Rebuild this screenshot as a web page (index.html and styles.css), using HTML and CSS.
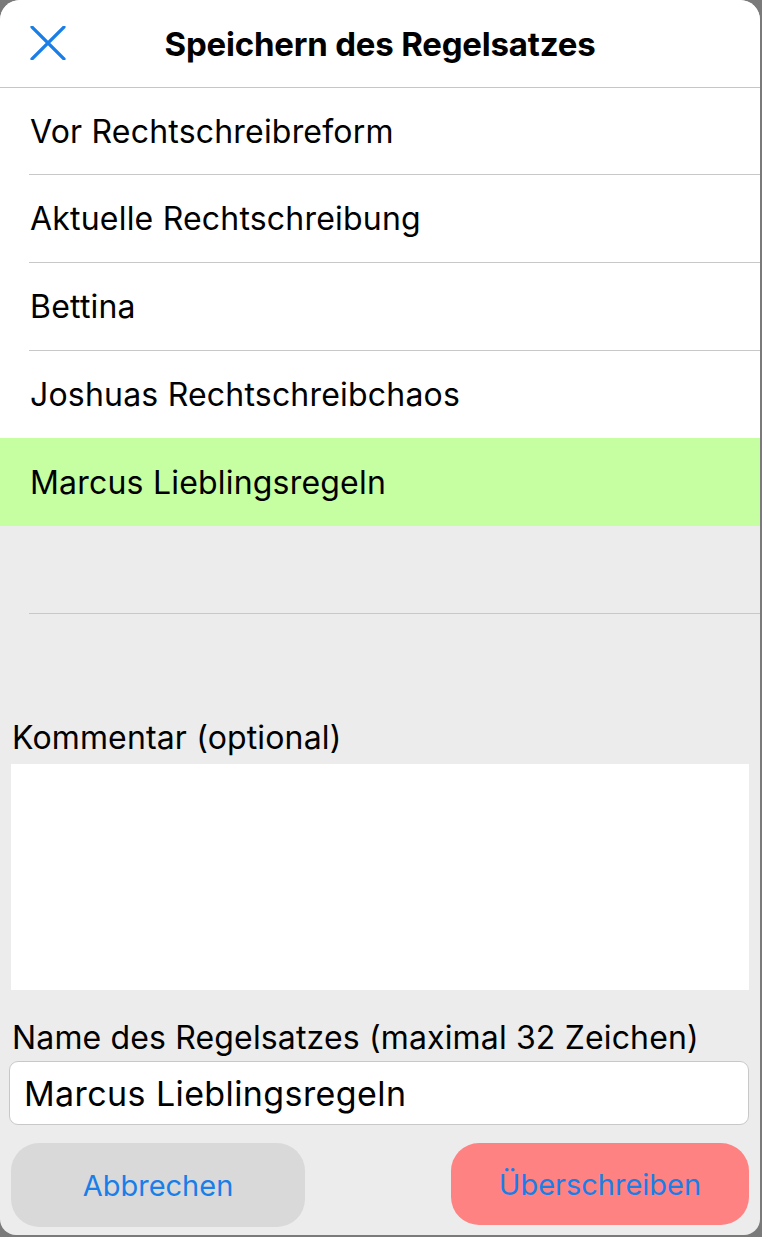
FILE: index.html
```html
<!DOCTYPE html>
<html lang="de">
<head>
<meta charset="utf-8">
<title>Speichern des Regelsatzes</title>
<link rel="stylesheet" href="styles.css">
</head>
<body>
<div class="sheet">
  <header class="header">
    <button class="close" aria-label="Schließen">
      <svg width="36" height="34" viewBox="0 0 36 34"><path d="M2 1 L34 33 M34 1 L2 33" stroke="#1a7ee8" stroke-width="3.2" stroke-linecap="round" fill="none"/></svg>
    </button>
    <h1 class="title">Speichern des Regelsatzes</h1>
  </header>
  <ul class="list">
    <li class="row"><div class="row-inner">Vor Rechtschreibreform</div></li>
    <li class="row"><div class="row-inner">Aktuelle Rechtschreibung</div></li>
    <li class="row"><div class="row-inner">Bettina</div></li>
    <li class="row before-selected"><div class="row-inner">Joshuas Rechtschreibchaos</div></li>
    <li class="row selected"><div class="row-inner">Marcus Lieblingsregeln</div></li>
    <li class="row empty"><div class="row-inner"></div></li>
  </ul>
  <div class="form">
    <label class="label label-comment">Kommentar (optional)</label>
    <div class="textarea"></div>
    <label class="label label-name">Name des Regelsatzes (maximal 32 Zeichen)</label>
    <div class="input">Marcus Lieblingsregeln</div>
    <div class="buttons">
      <button class="btn btn-cancel">Abbrechen</button>
      <button class="btn btn-overwrite">Überschreiben</button>
    </div>
  </div>
</div>
</body>
</html>
```

FILE: styles.css
```css
html, body {
  margin: 0;
  padding: 0;
  background: #7a7a7a;
  font-family: "Inter", "Roboto", "Liberation Sans", sans-serif;
  color: #000;
}
.sheet {
  width: 760px;
  height: 1235px;
  background: #ececec;
  border-radius: 20px 20px 16px 16px;
  overflow: hidden;
  display: flex;
  flex-direction: column;
}
.header {
  height: 87px;
  background: #fff;
  border-bottom: 1px solid #c6c6c6;
  display: flex;
  align-items: center;
  position: relative;
  flex-shrink: 0;
}
.close {
  position: absolute;
  left: 30px;
  top: 26px;
  width: 36px;
  height: 34px;
  padding: 0;
  border: 0;
  background: none;
  display: flex;
}
.title {
  margin: 0;
  width: 100%;
  text-align: center;
  font-size: 33px;
  font-weight: 700;
  letter-spacing: -0.2px;
  padding-left: 0;
}
.list {
  list-style: none;
  margin: 0;
  padding: 0;
  background: #fff;
}
.row {
  padding-left: 29px;
  background: #fff;
}
.row-inner {
  height: 87px;
  border-bottom: 1px solid #c8c8c8;
  display: flex;
  align-items: center;
  padding-left: 1px;
  font-size: 32px;
  letter-spacing: 0.2px;
}
.row:first-child .row-inner {
  height: 86px;
}
.row.before-selected .row-inner {
  border-bottom: 0;
}
.row.selected {
  background: #c6fea2;
}
.row.selected .row-inner {
  border-bottom: 0;
  height: 88px;
}
.row.empty {
  background: #ececec;
}
.row.empty .row-inner {
  height: 87px;
}
.form {
  display: flex;
  flex-direction: column;
  padding: 0 11px 0 11px;
}
.label {
  font-size: 32px;
  line-height: 38px;
  padding-left: 1px;
  letter-spacing: 0.15px;
}
.label-comment {
  margin-top: 105px;
}
.textarea {
  height: 226px;
  background: #fff;
  margin-top: 7px;
}
.label-name {
  margin-top: 29px;
}
.input {
  margin-top: 4px;
  margin-left: -2px;
  height: 62px;
  background: #fff;
  border: 1px solid #c8c8c8;
  border-radius: 9px;
  display: flex;
  align-items: center;
  padding-left: 14px;
  font-size: 34px;
  letter-spacing: 0.4px;
}
.buttons {
  margin-top: 18px;
  display: flex;
  justify-content: space-between;
}
.btn {
  border: 0;
  font-family: inherit;
  font-size: 29px;
  color: #1a7ee8;
  height: 84px;
  border-radius: 28px;
  padding: 0;
}
.btn-cancel {
  width: 294px;
  background: #d9d9d9;
}
.btn-overwrite {
  width: 298px;
  height: 82px;
  background: #ff8282;
}
```
